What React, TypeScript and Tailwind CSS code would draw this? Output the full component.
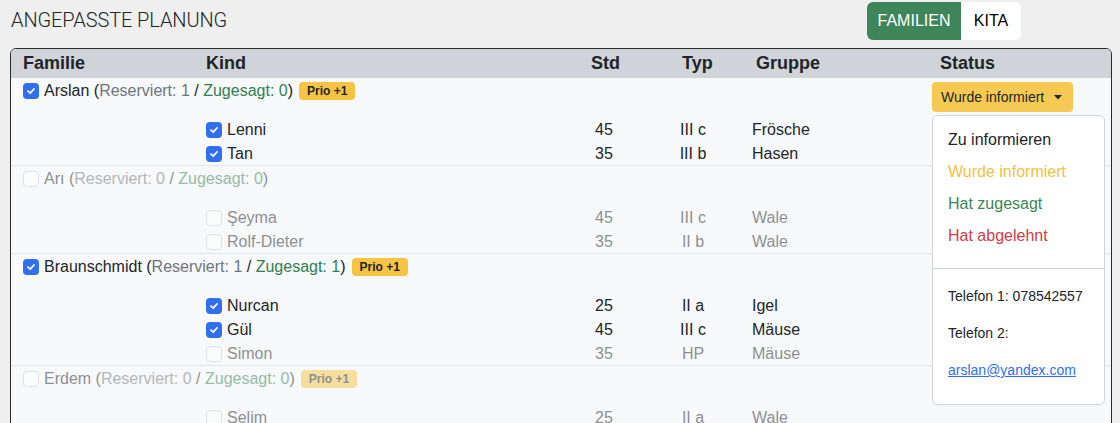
import { ReactNode } from 'react';

type Kid = {
  name: string;
  std: number;
  typ: string;
  gruppe: string;
  checked: boolean;
};

type Family = {
  name: string;
  reserviert: number;
  zugesagt: number;
  checked: boolean;
  prio?: boolean;
  status?: 'informiert' | 'zugesagt';
  kids: Kid[];
};

const families: Family[] = [
  {
    name: 'Arslan',
    reserviert: 1,
    zugesagt: 0,
    checked: true,
    prio: true,
    status: 'informiert',
    kids: [
      { name: 'Lenni', std: 45, typ: 'III c', gruppe: 'Frösche', checked: true },
      { name: 'Tan', std: 35, typ: 'III b', gruppe: 'Hasen', checked: true },
    ],
  },
  {
    name: 'Arı',
    reserviert: 0,
    zugesagt: 0,
    checked: false,
    kids: [
      { name: 'Şeyma', std: 45, typ: 'III c', gruppe: 'Wale', checked: false },
      { name: 'Rolf-Dieter', std: 35, typ: 'II b', gruppe: 'Wale', checked: false },
    ],
  },
  {
    name: 'Braunschmidt',
    reserviert: 1,
    zugesagt: 1,
    checked: true,
    prio: true,
    status: 'zugesagt',
    kids: [
      { name: 'Nurcan', std: 25, typ: 'II a', gruppe: 'Igel', checked: true },
      { name: 'Gül', std: 45, typ: 'III c', gruppe: 'Mäuse', checked: true },
      { name: 'Simon', std: 35, typ: 'HP', gruppe: 'Mäuse', checked: false },
    ],
  },
  {
    name: 'Erdem',
    reserviert: 0,
    zugesagt: 0,
    checked: false,
    prio: true,
    kids: [
      { name: 'Selim', std: 25, typ: 'II a', gruppe: 'Wale', checked: false },
    ],
  },
];

function Checkbox({ checked }: { checked: boolean }) {
  if (!checked) {
    return (
      <span className="w-4 h-4 shrink-0 rounded-[4px] border border-[#c9cbcf] bg-white" />
    );
  }
  return (
    <span className="w-4 h-4 shrink-0 rounded-[4px] bg-[#2f6ff0] flex items-center justify-center">
      <svg width="10" height="10" viewBox="0 0 10 10">
        <path d="M2 5.2 L4.2 7.2 L8 3" fill="none" stroke="white" strokeWidth="1.8" strokeLinecap="round" strokeLinejoin="round" />
      </svg>
    </span>
  );
}

function StatusButton({ status }: { status: 'informiert' | 'zugesagt' }) {
  // gelb = informiert, grün = zugesagt
  const cls =
    status === 'informiert'
      ? 'bg-[#f6ca52] text-[#212529]'
      : 'bg-[#3f8a5a] text-white';
  return (
    <button className={`mt-[4px] h-[30px] pl-[9px] pr-[11px] rounded-[4px] text-[14px] flex items-center gap-[10px] ${cls}`}>
      {status === 'informiert' ? 'Wurde informiert' : 'Hat zugesagt'}
      <svg width="8" height="5" viewBox="0 0 8 5">
        <path d="M0 0 L8 0 L4 4.5 Z" fill="currentColor" />
      </svg>
    </button>
  );
}

function FamilyGroup({ family, first }: { family: Family; first: boolean }) {
  return (
    <div className={first ? '' : 'border-t border-[#e2e3e5]'}>
      <div className="h-[39px] flex items-start pl-[12px]">
        <div className={`w-[909px] h-[24px] pt-[1px] flex items-center gap-[5px] text-[16px] ${family.checked ? '' : 'opacity-50'}`}>
          <Checkbox checked={family.checked} />
          <span>
            {family.name} (
            <span className="text-[#6c757d]">Reserviert: {family.reserviert}</span> /{' '}
            <span className="text-[#2f8050]">Zugesagt: {family.zugesagt}</span>)
          </span>
          {family.prio && (
            <span className="ml-[1px] h-[18px] px-[8px] rounded-[4px] bg-[#f6c445] text-[12px] font-bold flex items-center">
              Prio +1
            </span>
          )}
        </div>
        {family.status && <StatusButton status={family.status} />}
      </div>
      {family.kids.map(kid => (
        <div key={kid.name} className={`h-[24px] pt-[1px] flex items-center text-[16px] ${kid.checked ? '' : 'opacity-50'}`}>
          <div className="w-[195px]" />
          <div className="w-[368px] flex items-center gap-[5px]">
            <Checkbox checked={kid.checked} />
            <span>{kid.name}</span>
          </div>
          <div className="w-[60px] text-center">{kid.std}</div>
          <div className="w-[118px] text-center">{kid.typ}</div>
          <div className="w-[180px]">{kid.gruppe}</div>
        </div>
      ))}
    </div>
  );
}

function HeaderCell({ w, children }: { w: string; children: ReactNode }) {
  return <div className={w}>{children}</div>;
}

export default function App() {
  return (
    <div className="relative w-[1120px] h-[423px] overflow-hidden bg-[#efefef] text-[#212529] font-['Liberation_Sans',Arial,sans-serif]">
      <div className="h-[48px] flex items-start">
        <h1 className="pl-[11px] pt-[8px] text-[20px] leading-[24px] font-light tracking-[-0.1px] font-['Roboto',sans-serif]">
          ANGEPASSTE PLANUNG
        </h1>
        <div className="ml-auto mr-[99px] mt-[2px] flex h-[38px] rounded-[6px] overflow-hidden text-[16px]">
          <button className="w-[94px] bg-[#3f855a] text-white">FAMILIEN</button>
          <button className="w-[60px] bg-white text-black">KITA</button>
        </div>
      </div>

      <div className="ml-[10px] w-[1102px] h-[400px] border border-[#2b2b2b] rounded-t-[6px] bg-[#f8f9fa] overflow-hidden">
        <div className="h-[29px] bg-[#d0d4d8] flex items-center pl-[12px] text-[18px] font-bold">
          <HeaderCell w="w-[183px]">Familie</HeaderCell>
          <HeaderCell w="w-[385px]">Kind</HeaderCell>
          <HeaderCell w="w-[91px]">Std</HeaderCell>
          <HeaderCell w="w-[74px]">Typ</HeaderCell>
          <HeaderCell w="w-[184px]">Gruppe</HeaderCell>
          <HeaderCell w="w-[100px]">Status</HeaderCell>
        </div>
        {families.map((f, i) => (
          <FamilyGroup key={f.name} family={f} first={i === 0} />
        ))}
      </div>

      {/* Dropdown für Arslan */}
      <div className="absolute left-[932px] top-[115px] w-[173px] h-[290px] bg-white border border-[#d4d5d7] rounded-[6px] shadow-[0_1px_2px_rgba(0,0,0,0.04)]">
        <div className="pt-[8px] text-[16px]">
          <div className="h-[32px] pl-[15px] flex items-center">Zu informieren</div>
          <div className="h-[32px] pl-[15px] flex items-center text-[#f3c141]">Wurde informiert</div>
          <div className="h-[32px] pl-[15px] flex items-center text-[#3a8756]">Hat zugesagt</div>
          <div className="h-[32px] pl-[15px] flex items-center text-[#d03d47]">Hat abgelehnt</div>
        </div>
        <div className="mt-[16px] border-t border-[#cfd0d2]" />
        <div className="pl-[15px] pt-[19px] text-[14px] flex flex-col gap-[21px]">
          <div className="h-[16px] leading-[16px]">Telefon 1: 078542557</div>
          <div className="h-[16px] leading-[16px]">Telefon 2:</div>
          <a className="h-[16px] leading-[16px] text-[#2f6ff0] underline">arslan@yandex.com</a>
        </div>
      </div>
    </div>
  );
}
